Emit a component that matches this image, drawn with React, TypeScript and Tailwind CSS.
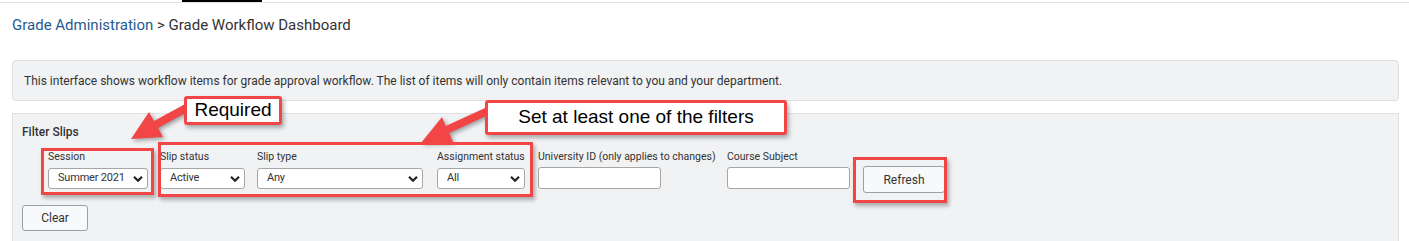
import { FunctionComponent } from "react";

const Chevron = () => (
  <svg
    className="pointer-events-none absolute right-[5px] top-1/2 -translate-y-1/2"
    width="10"
    height="7"
    viewBox="0 0 10 7"
  >
    <path d="M1 1.2 L5 5.2 L9 1.2" fill="none" stroke="#222" strokeWidth="2.2" />
  </svg>
);

const SelectField: FunctionComponent<{ label: string; value: string; width: string }> = ({
  label,
  value,
  width,
}) => (
  <div className={`flex flex-col ${width}`}>
    <label className="whitespace-nowrap text-[10.5px] leading-[14px] text-[#333]">{label}</label>
    <div className="relative mt-[4px] w-full">
      <select
        className="block h-[21px] w-full appearance-none rounded-[3px] border border-[#a6a6a6] bg-white py-0 pl-[9px] pr-[14px] text-[11px] tracking-[-0.2px] text-[#333] outline-none"
        defaultValue={value}
      >
        <option>{value}</option>
      </select>
      <Chevron />
    </div>
  </div>
);

const TextField: FunctionComponent<{ label: string; width: string }> = ({ label, width }) => (
  <div className={`flex flex-col ${width}`}>
    <label className="whitespace-nowrap text-[10.5px] leading-[14px] text-[#333]">{label}</label>
    <input
      className="mt-[3px] block h-[22px] w-[123px] rounded-[3px] border border-[#a6a6a6] bg-white outline-none"
      type="text"
    />
  </div>
);

const App: FunctionComponent = () => {
  return (
    <div className="relative h-[241px] w-[1409px] overflow-hidden bg-white font-['Roboto',sans-serif] text-[#333]">
      {/* top tab strip */}
      <div className="h-[3px] border-b border-[#e3e3e3] pl-[182px]">
        <div className="h-[2px] w-[80px] bg-black" />
      </div>

      <div className="mt-[12px] pl-[12px] text-[15px] leading-[20px]">
        <span className="text-[#1f5a92]">Grade Administration</span>
        <span className="text-[#333]"> &gt; Grade Workflow Dashboard</span>
      </div>

      <div className="ml-[12px] mr-[10px] mt-[25px] flex h-[41px] items-center rounded-[4px] border border-[#dedede] bg-[#f1f2f4] pl-[11px] text-[12px]">
        This interface shows workflow items for grade approval workflow. The list of items will only contain items relevant to you and your department.
      </div>

      <div className="ml-[12px] mr-[10px] mt-[12px] h-[130px] border border-[#e0e0e0] bg-[#f1f2f4] pl-[9px] pt-[10px]">
        <div className="text-[12px] font-medium leading-[16px]">Filter Slips</div>
        <div className="mt-[10px] flex items-start gap-[12px] pl-[26px]">
          <SelectField label="Session" value="Summer 2021" width="w-[100px]" />
          <SelectField label="Slip status" value="Active" width="w-[85px]" />
          <SelectField label="Slip type" value="Any" width="w-[166px]" />
          <div className="ml-[2px]">
            <SelectField label="Assignment status" value="All" width="w-[88px]" />
          </div>
          <div className="ml-[1px]">
            <TextField label="University ID (only applies to changes)" width="w-[177px]" />
          </div>
          <TextField label="Course Subject" width="w-[123px]" />
          <button className="ml-[1px] mt-[16px] h-[27px] w-[82px] rounded-[3px] border border-[#9ca0a6] bg-[#f8f9fa] text-[12px] text-[#333]">
            Refresh
          </button>
        </div>
        <button className="mt-[12px] block h-[26px] w-[66px] rounded-[3px] border border-[#9ca0a6] bg-[#f8f9fa] text-[12px] text-[#333]">
          Clear
        </button>
      </div>

      {/* annotation overlay */}
      <svg
        className="pointer-events-none absolute left-0 top-0 drop-shadow-[2px_2px_2px_rgba(0,0,0,0.35)]"
        width="1409"
        height="241"
      >
        <polygon
          points="131,139 149,112 154,121 188,102.5 192,109.5 158,128 163,137"
          fill="#f24646"
        />
        <polygon
          points="421,143 442,117 445.8,125.9 488.3,106.4 491.7,113.6 449.2,133.1 453,142"
          fill="#f24646"
        />
      </svg>

      <div className="pointer-events-none absolute left-[41px] top-[148px] h-[47px] w-[113px] border-[3px] border-[#f24646] shadow-[2px_3px_4px_rgba(0,0,0,0.3)]" />
      <div className="pointer-events-none absolute left-[158px] top-[142px] h-[55px] w-[375px] border-[3px] border-[#f24646] shadow-[2px_3px_4px_rgba(0,0,0,0.3)]" />
      <div className="pointer-events-none absolute left-[853px] top-[157px] h-[46px] w-[94px] border-[3px] border-[#f24646] shadow-[2px_3px_4px_rgba(0,0,0,0.3)]" />

      <div className="absolute left-[184px] top-[96px] flex h-[29px] w-[98px] items-center justify-center rounded-[3px] border-[3px] border-[#f24646] bg-white font-['Liberation_Sans',Arial,sans-serif] text-[19px] text-black shadow-[2px_3px_4px_rgba(0,0,0,0.3)]">
        Required
      </div>
      <div className="absolute left-[485px] top-[100px] flex h-[35px] w-[302px] items-center justify-center rounded-[3px] border-[3px] border-[#f24646] bg-white font-['Liberation_Sans',Arial,sans-serif] text-[19px] text-black shadow-[2px_3px_4px_rgba(0,0,0,0.3)]">
        Set at least one of the filters
      </div>
    </div>
  );
};

export default App;
